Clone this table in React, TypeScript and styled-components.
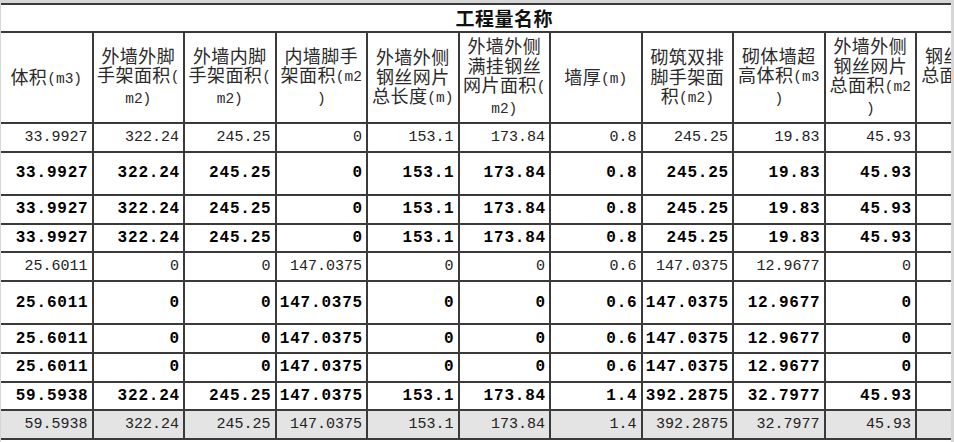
import React from "react";
import styled, { createGlobalStyle } from "styled-components";

const Global = createGlobalStyle`
  html, body { margin: 0; padding: 0; background: #fff; }
  body { width: 954px; height: 442px; overflow: hidden; }
`;

const Frame = styled.div`
  box-sizing: border-box;
  width: 954px;
  height: 442px;
  overflow: hidden;
  background: #fff;
  border-top: 3px solid #d6d6d6;
  border-left: 1px solid #d6d6d6;
  border-right: 3px solid #d6d6d6;
`;

const Sheet = styled.table`
  border-collapse: collapse;
  table-layout: fixed;
  width: 1006px;
`;

const Col = styled.col`
  width: 91.5px;
`;

const LINE = "2px solid #3a3a3a";

const TitleCell = styled.th`
  height: 26px;
  padding: 0;
  border-top: ${LINE};
  border-bottom: ${LINE};
  font-family: "Noto Sans CJK SC", sans-serif;
  font-weight: 700;
  font-size: 19px;
  line-height: 20px;
  letter-spacing: 0.5px;
  text-align: center;
  color: #111;
`;

const HeadCell = styled.th`
  height: 89px;
  padding: 0;
  border: ${LINE};
  &:first-child { border-left: none; }
  font-family: "Noto Sans CJK SC", sans-serif;
  font-weight: 400;
  font-size: 18px;
  line-height: 19.5px;
  letter-spacing: 0.4px;
  color: #2a2a2a;
  text-align: center;
  vertical-align: middle;
  white-space: nowrap;
  overflow: hidden;
`;

const Latin = styled.span`
  font-family: "Liberation Mono", monospace;
  font-size: 14.5px;
  letter-spacing: 0;
  vertical-align: 1.5px;
`;

const Row = styled.tr<{ $tall?: boolean; $shade?: boolean }>`
  height: ${(p) => (p.$tall ? "43.3px" : "28.7px")};
  background: ${(p) => (p.$shade ? "#e4e4e4" : "#fff")};
`;

const Cell = styled.td<{ $bold?: boolean }>`
  padding: 0 ${(p) => (p.$bold ? "3px" : "4px")} 0 0;
  border: ${LINE};
  &:first-child { border-left: none; }
  font-family: "Liberation Mono", monospace;
  font-size: ${(p) => (p.$bold ? "16px" : "15px")};
  font-weight: ${(p) => (p.$bold ? 700 : 400)};
  letter-spacing: ${(p) => (p.$bold ? "0.8px" : "0")};
  color: ${(p) => (p.$bold ? "#000" : "#222")};
  text-align: right;
  vertical-align: middle;
  white-space: nowrap;
  overflow: hidden;
`;

const headers: string[][] = [
  ["体积(m3)"],
  ["外墙外脚", "手架面积(", "m2)"],
  ["外墙内脚", "手架面积(", "m2)"],
  ["内墙脚手", "架面积(m2", ")"],
  ["外墙外侧", "钢丝网片", "总长度(m)"],
  ["外墙外侧", "满挂钢丝", "网片面积(", "m2)"],
  ["墙厚(m)"],
  ["砌筑双排", "脚手架面", "积(m2)"],
  ["砌体墙超", "高体积(m3", ")"],
  ["外墙外侧", "钢丝网片", "总面积(m2", ")"],
  ["钢丝网片", "总面积(m2", ")"],
];

const A = ["33.9927", "322.24", "245.25", "0", "153.1", "173.84", "0.8", "245.25", "19.83", "45.93", "45.93"];
const B = ["25.6011", "0", "0", "147.0375", "0", "0", "0.6", "147.0375", "12.9677", "0", "0"];
const T = ["59.5938", "322.24", "245.25", "147.0375", "153.1", "173.84", "1.4", "392.2875", "32.7977", "45.93", "45.93"];

type RowData = { values: string[]; bold?: boolean; tall?: boolean; shade?: boolean };

const rows: RowData[] = [
  { values: A },
  { values: A, bold: true, tall: true },
  { values: A, bold: true },
  { values: A, bold: true },
  { values: B },
  { values: B, bold: true, tall: true },
  { values: B, bold: true },
  { values: B, bold: true },
  { values: T, bold: true },
  { values: T, shade: true },
];

function HeadLine({ text }: { text: string }) {
  const parts = text.split(/([\x20-\x7e]+)/).filter((s) => s.length > 0);
  return (
    <>
      {parts.map((p, i) =>
        /^[\x20-\x7e]+$/.test(p) ? <Latin key={i}>{p}</Latin> : <React.Fragment key={i}>{p}</React.Fragment>
      )}
    </>
  );
}

export default function App() {
  return (
    <>
      <Global />
      <Frame>
        <Sheet>
          <colgroup>
            {headers.map((_, i) => (
              <Col key={i} />
            ))}
          </colgroup>
          <thead>
            <tr>
              <TitleCell colSpan={11}>工程量名称</TitleCell>
            </tr>
            <tr>
              {headers.map((lines, i) => (
                <HeadCell key={i}>
                  {lines.map((l, j) => (
                    <React.Fragment key={j}>
                      {j > 0 && <br />}
                      <HeadLine text={l} />
                    </React.Fragment>
                  ))}
                </HeadCell>
              ))}
            </tr>
          </thead>
          <tbody>
            {rows.map((r, i) => (
              <Row key={i} $tall={r.tall} $shade={r.shade}>
                {r.values.map((v, j) => (
                  <Cell key={j} $bold={r.bold}>
                    {v}
                  </Cell>
                ))}
              </Row>
            ))}
          </tbody>
        </Sheet>
      </Frame>
    </>
  );
}
